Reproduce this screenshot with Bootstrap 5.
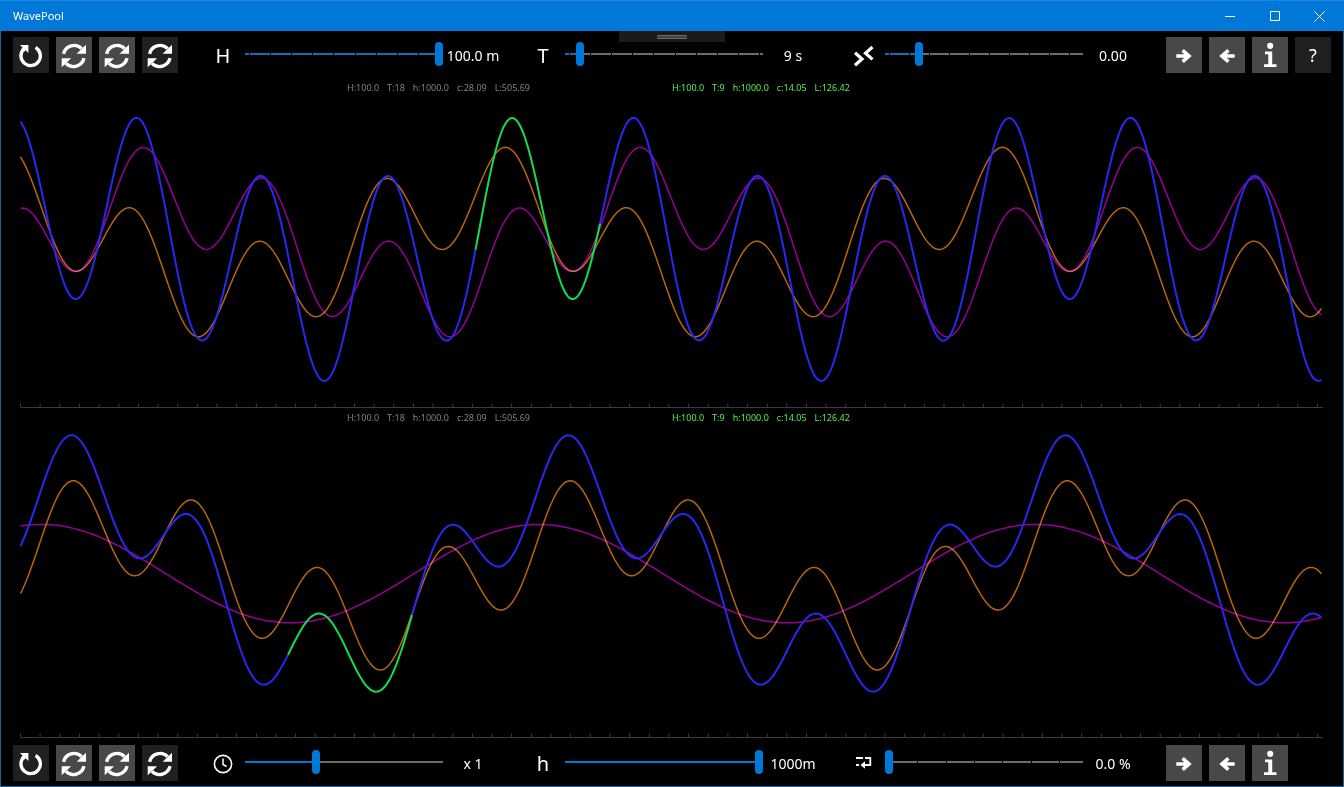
<!DOCTYPE html>
<html lang="en" data-bs-theme="dark">
<head>
<meta charset="utf-8">
<meta name="viewport" content="width=device-width, initial-scale=1">
<title>WavePool</title>
<link href="https://cdn.jsdelivr.net/npm/bootstrap@5.3.0/dist/css/bootstrap.min.css" rel="stylesheet">
<style>
  :root { --accent: #0078d7; }
  body { background: #000; color: #fff; font-family: "Noto Sans", "Open Sans", sans-serif; font-size: 14px; line-height: 20px; }
  .app-window { border: 1px solid #1467ab; border-top: 0; }
  .title-bar { background: var(--accent); height: 31px; border-top: 1px solid #1f88dd; font-size: 11px; margin: 0 -1px; padding: 0 2px 0 13px; }
  .caption-btn { width: 45px; height: 30px; background: none; border: 0; color: #fff; padding: 0; display: grid; place-items: center; }
  .caption-btn svg { width: 11px; height: 11px; fill: none; stroke: #fff; }
  .tool-row { padding: 6px 12px 5px; }
  .tool-row.lower { padding-top: 7px; }
  .tool-set { gap: 7px; }
  .tool-set.end { width: 165px; }
  .tool-btn { width: 36px; height: 36px; flex: none; border: 0; border-radius: 0; padding: 0; background: #202020; color: #fff; font-size: 18px; line-height: 36px; }
  .tool-btn.on { background: #484848; }
  .tool-btn svg { display: block; width: 36px; height: 36px; }
  .controls { display: grid; grid-template-columns: repeat(3, 1fr); margin: 0 3px 0 25px; }
  .control { padding-right: 20px; }
  .control-name { width: 42px; padding: 2px 2px 0 0; font-size: 20px; line-height: 24px; text-align: center; }
  .control-name svg { display: block; width: 24px; height: 24px; margin: -2px auto 0; }
  .control-value { width: 60px; text-align: center; white-space: nowrap; padding-top: 1px; }
  .slide { --at: calc(4px + (100% - 8px) * var(--v)); --step: calc((100% - 8px) / var(--n, 1));
    -webkit-appearance: none; appearance: none; flex: 1 1 0; min-width: 0; height: 24px; margin: 0 0 2px;
    background: linear-gradient(90deg, var(--fill, var(--accent)) var(--at), #6c6c6c var(--at)) center / 100% 2px no-repeat; }
  .slide.stepped { --fill: #1c6cb4;
    background: repeating-linear-gradient(90deg, #000 0 1px, transparent 1px var(--step)) 4px center / 100% 2px no-repeat,
      linear-gradient(90deg, var(--fill) var(--at), #6c6c6c var(--at)) center / 100% 2px no-repeat; }
  .slide::-webkit-slider-thumb { -webkit-appearance: none; width: 8px; height: 24px; border-radius: 4px; background: var(--accent); border: 0; }
  .slide::-moz-range-thumb { width: 8px; height: 24px; border-radius: 4px; background: var(--accent); border: 0; }
  .grip { top: 0; left: 50%; width: 106px; height: 11px; margin-left: -53px; background: #1b1b1b; border: 0; padding: 0; display: grid; place-items: center; }
  .grip span { width: 30px; height: 4px; border: solid #666; border-width: 1px 0; background: #444; }
  .pool { min-height: 160px; }
  .pool svg { display: block; width: 100%; height: 100%; position: absolute; }
  .pool path { fill: none; vector-effect: non-scaling-stroke; stroke-width: 2; }
  .wave-left { stroke: #960096; stroke-width: 1.5 !important; }
  .wave-right { stroke: #b9640f; stroke-width: 1.5 !important; mix-blend-mode: screen; }
  .wave-sum { stroke: #2828f0; }
  .wave-mark { stroke: #14dc50; }
  .axis-line { stroke: #3c3c3c; stroke-width: 1 !important; }
  .readout { top: 3px; left: 0; right: 0; font-size: 9px; line-height: 14px; display: grid; grid-template-columns: 1fr 1fr; white-space: nowrap; }
  .readout > div { gap: 8px; }
  .past { color: #808080; padding-right: 142px; justify-content: end; }
  .now { color: #50f050; }
</style>
</head>
<body>
<svg class="d-none" aria-hidden="true">
  <symbol id="i-reload" viewBox="0 0 36 36"><path d="M10.8 12A9.7 9.7 0 1 0 22.6 10.5" fill="none" stroke="#fff" stroke-width="3.3"/><path d="M7 8H15.4V16L12.6 13.3 10.6 15.2 8 12.5 9.7 10.7z" fill="#fff"/></symbol>
  <symbol id="i-sync" viewBox="0 0 36 36"><path d="M7.6 16.8A10.7 10.7 0 0 1 25.6 11.6" fill="none" stroke="#fff" stroke-width="3.4"/><path d="M30 7.8V16.8H20.6z" fill="#fff"/><path d="M28 21.2A10.7 10.7 0 0 1 10 26.4" fill="none" stroke="#fff" stroke-width="3.4"/><path d="M5.7 30.2V21.2H15.1z" fill="#fff"/></symbol>
  <symbol id="i-right" viewBox="0 0 36 36"><path d="M10.3 19H23M16.6 13.4L23 19 16.6 24.6" fill="none" stroke="#fff" stroke-width="3.6"/></symbol>
  <symbol id="i-left" viewBox="0 0 36 36"><path d="M25.7 19H13M19.4 13.4L13 19 19.4 24.6" fill="none" stroke="#fff" stroke-width="3.6"/></symbol>
  <symbol id="i-info" viewBox="0 0 36 36"><circle cx="18.2" cy="8.8" r="3.1" fill="#fff"/><path d="M13 14.6H20.2V27.2H24.5V30H12V27.2H16.3V17.2H13z" fill="#fff"/></symbol>
</svg>

<div class="app-window d-flex flex-column min-vh-100">
  <header class="title-bar d-flex align-items-center justify-content-between">
    <span>WavePool</span>
    <div class="d-flex">
      <button class="caption-btn" aria-label="Minimize"><svg viewBox="0 0 11 11"><path d="M1 5.5H11"/></svg></button>
      <button class="caption-btn" aria-label="Maximize"><svg viewBox="0 0 11 11"><path d="M1.5.5h9v9h-9z"/></svg></button>
      <button class="caption-btn" aria-label="Close"><svg viewBox="0 0 11 11"><path d="M.5.5l10 10M10.5.5l-10 10"/></svg></button>
    </div>
  </header>

  <div class="tool-row d-flex align-items-center position-relative">
    <button class="grip position-absolute" aria-label="Panel grip"><span></span></button>
    <div class="tool-set d-flex">
      <button class="tool-btn" aria-label="Restart"><svg><use href="#i-reload"/></svg></button>
      <button class="tool-btn on" aria-label="Cycle first wave"><svg><use href="#i-sync"/></svg></button>
      <button class="tool-btn on" aria-label="Cycle second wave"><svg><use href="#i-sync"/></svg></button>
      <button class="tool-btn" aria-label="Cycle sum"><svg><use href="#i-sync"/></svg></button>
    </div>
    <div class="controls flex-grow-1">
      <div class="control d-flex align-items-center">
        <label class="control-name" for="height">H</label>
        <input class="slide stepped" id="height" type="range" value="100" style="--v:1;--n:9">
        <output class="control-value" for="height">100.0 m</output>
      </div>
      <div class="control d-flex align-items-center">
        <label class="control-name" for="period">T</label>
        <input class="slide stepped" id="period" type="range" value="6" style="--v:.06;--n:9">
        <output class="control-value" for="period">9 s</output>
      </div>
      <div class="control d-flex align-items-center">
        <label class="control-name" for="phase" aria-label="Phase"><svg viewBox="0 0 24 24" fill="none" stroke="#fff" stroke-width="3.2"><path d="M4 9.8L11 16 4 22.2M21.5 4L14.5 10.2 21.5 16.4"/></svg></label>
        <input class="slide stepped" id="phase" type="range" value="16" style="--v:.16;--n:9.5">
        <output class="control-value" for="phase">0.00</output>
      </div>
    </div>
    <div class="tool-set end d-flex">
      <button class="tool-btn on" aria-label="Wave to the right"><svg><use href="#i-right"/></svg></button>
      <button class="tool-btn on" aria-label="Wave to the left"><svg><use href="#i-left"/></svg></button>
      <button class="tool-btn on" aria-label="Information"><svg><use href="#i-info"/></svg></button>
      <button class="tool-btn">?</button>
    </div>
  </div>

  <main class="flex-grow-1 d-flex flex-column">
    <section class="pool flex-fill position-relative" id="upper">
      <div class="readout position-absolute">
        <div class="past d-flex"><span>H:100.0</span><span>T:18</span><span>h:1000.0</span><span>c:28.09</span><span>L:505.69</span></div>
        <div class="now d-flex"><span>H:100.0</span><span>T:9</span><span>h:1000.0</span><span>c:14.05</span><span>L:126.42</span></div>
      </div>
    </section>
    <section class="pool flex-fill position-relative" id="lower">
      <div class="readout position-absolute">
        <div class="past d-flex"><span>H:100.0</span><span>T:18</span><span>h:1000.0</span><span>c:28.09</span><span>L:505.69</span></div>
        <div class="now d-flex"><span>H:100.0</span><span>T:9</span><span>h:1000.0</span><span>c:14.05</span><span>L:126.42</span></div>
      </div>
    </section>
  </main>

  <div class="tool-row lower d-flex align-items-center">
    <div class="tool-set d-flex">
      <button class="tool-btn" aria-label="Restart"><svg><use href="#i-reload"/></svg></button>
      <button class="tool-btn on" aria-label="Cycle first wave"><svg><use href="#i-sync"/></svg></button>
      <button class="tool-btn on" aria-label="Cycle second wave"><svg><use href="#i-sync"/></svg></button>
      <button class="tool-btn" aria-label="Cycle sum"><svg><use href="#i-sync"/></svg></button>
    </div>
    <div class="controls flex-grow-1">
      <div class="control d-flex align-items-center">
        <label class="control-name" for="speed" aria-label="Speed"><svg viewBox="0 0 24 24" fill="none" stroke="#fff"><circle cx="12" cy="13" r="8.6" stroke-width="1.6"/><path d="M12 7.5V13.5L15.6 15.5" stroke-width="1.5"/></svg></label>
        <input class="slide" id="speed" type="range" value="35" style="--v:.35">
        <output class="control-value" for="speed">x 1</output>
      </div>
      <div class="control d-flex align-items-center">
        <label class="control-name" for="depth">h</label>
        <input class="slide" id="depth" type="range" value="100" style="--v:1">
        <output class="control-value" for="depth">1000m</output>
      </div>
      <div class="control d-flex align-items-center">
        <label class="control-name" for="reflect" aria-label="Reflection"><svg viewBox="0 0 24 24" fill="none" stroke="#fff" stroke-width="1.8"><path d="M5 7H12M14 7H19.3V14H12M5 14H8"/><path d="M9.5 14L14 10.2V17.8z" fill="#fff" stroke="none"/></svg></label>
        <input class="slide stepped" id="reflect" type="range" value="0" style="--v:0;--n:6.7">
        <output class="control-value" for="reflect">0.0 %</output>
      </div>
    </div>
    <div class="tool-set end d-flex">
      <button class="tool-btn on" aria-label="Wave to the right"><svg><use href="#i-right"/></svg></button>
      <button class="tool-btn on" aria-label="Wave to the left"><svg><use href="#i-left"/></svg></button>
      <button class="tool-btn on" aria-label="Information"><svg><use href="#i-info"/></svg></button>
    </div>
  </div>
</div>

<script src="https://cdn.jsdelivr.net/npm/bootstrap@5.3.0/dist/js/bootstrap.bundle.min.js"></script>
<script>
  // Each wave train is a list of [wavelength, crest position]; every component has the same height.
  const LONG = 497, SHORT = LONG / 4, AMP = 49.2, REST = 165.6;
  const X0 = 19.5, X1 = 1320.5;
  const level = (train, x) => REST - train.reduce((s, [len, crest]) => s + AMP * Math.cos(2 * Math.PI * (x - crest) / len), 0);

  function trace(train, from, to, cls) {
    let d = '';
    for (let x = from; x <= to; x += 2) d += (d ? 'L' : 'M') + x + ' ' + level(train, x).toFixed(2);
    d += 'L' + to + ' ' + level(train, to).toFixed(2);
    return `<path class="${cls}" d="${d}"/>`;
  }

  function drawPool(id, left, right, markFrom, markTo) {
    const sum = [...left, ...right];
    let axis = `M${X0} 329.5H1322`;
    for (let i = 0; i <= 66; i++) axis += `M${(X0 + i * 19.65).toFixed(1)} 325.5V329`;
    document.getElementById(id).insertAdjacentHTML('afterbegin',
      `<svg viewBox="0 0 1342 330" preserveAspectRatio="none" role="img" aria-label="Wave profile">
        <path class="axis-line" d="${axis}"/>` +
      trace(left, X0, X1, 'wave-left') +
      trace(right, X0, X1, 'wave-right') +
      trace(sum, X0, markFrom, 'wave-sum') +
      trace(sum, markTo, X1, 'wave-sum') +
      trace(sum, markFrom, markTo, 'wave-mark') + '</svg>');
  }

  drawPool('upper', [[LONG, 165.3], [SHORT, 140.8]], [[LONG, -15.3], [SHORT, 133]], 474.5, 599);
  drawPool('lower', [[LONG, 40.5]], [[LONG, 109], [SHORT, 70]], 287, 411);
</script>
</body>
</html>
